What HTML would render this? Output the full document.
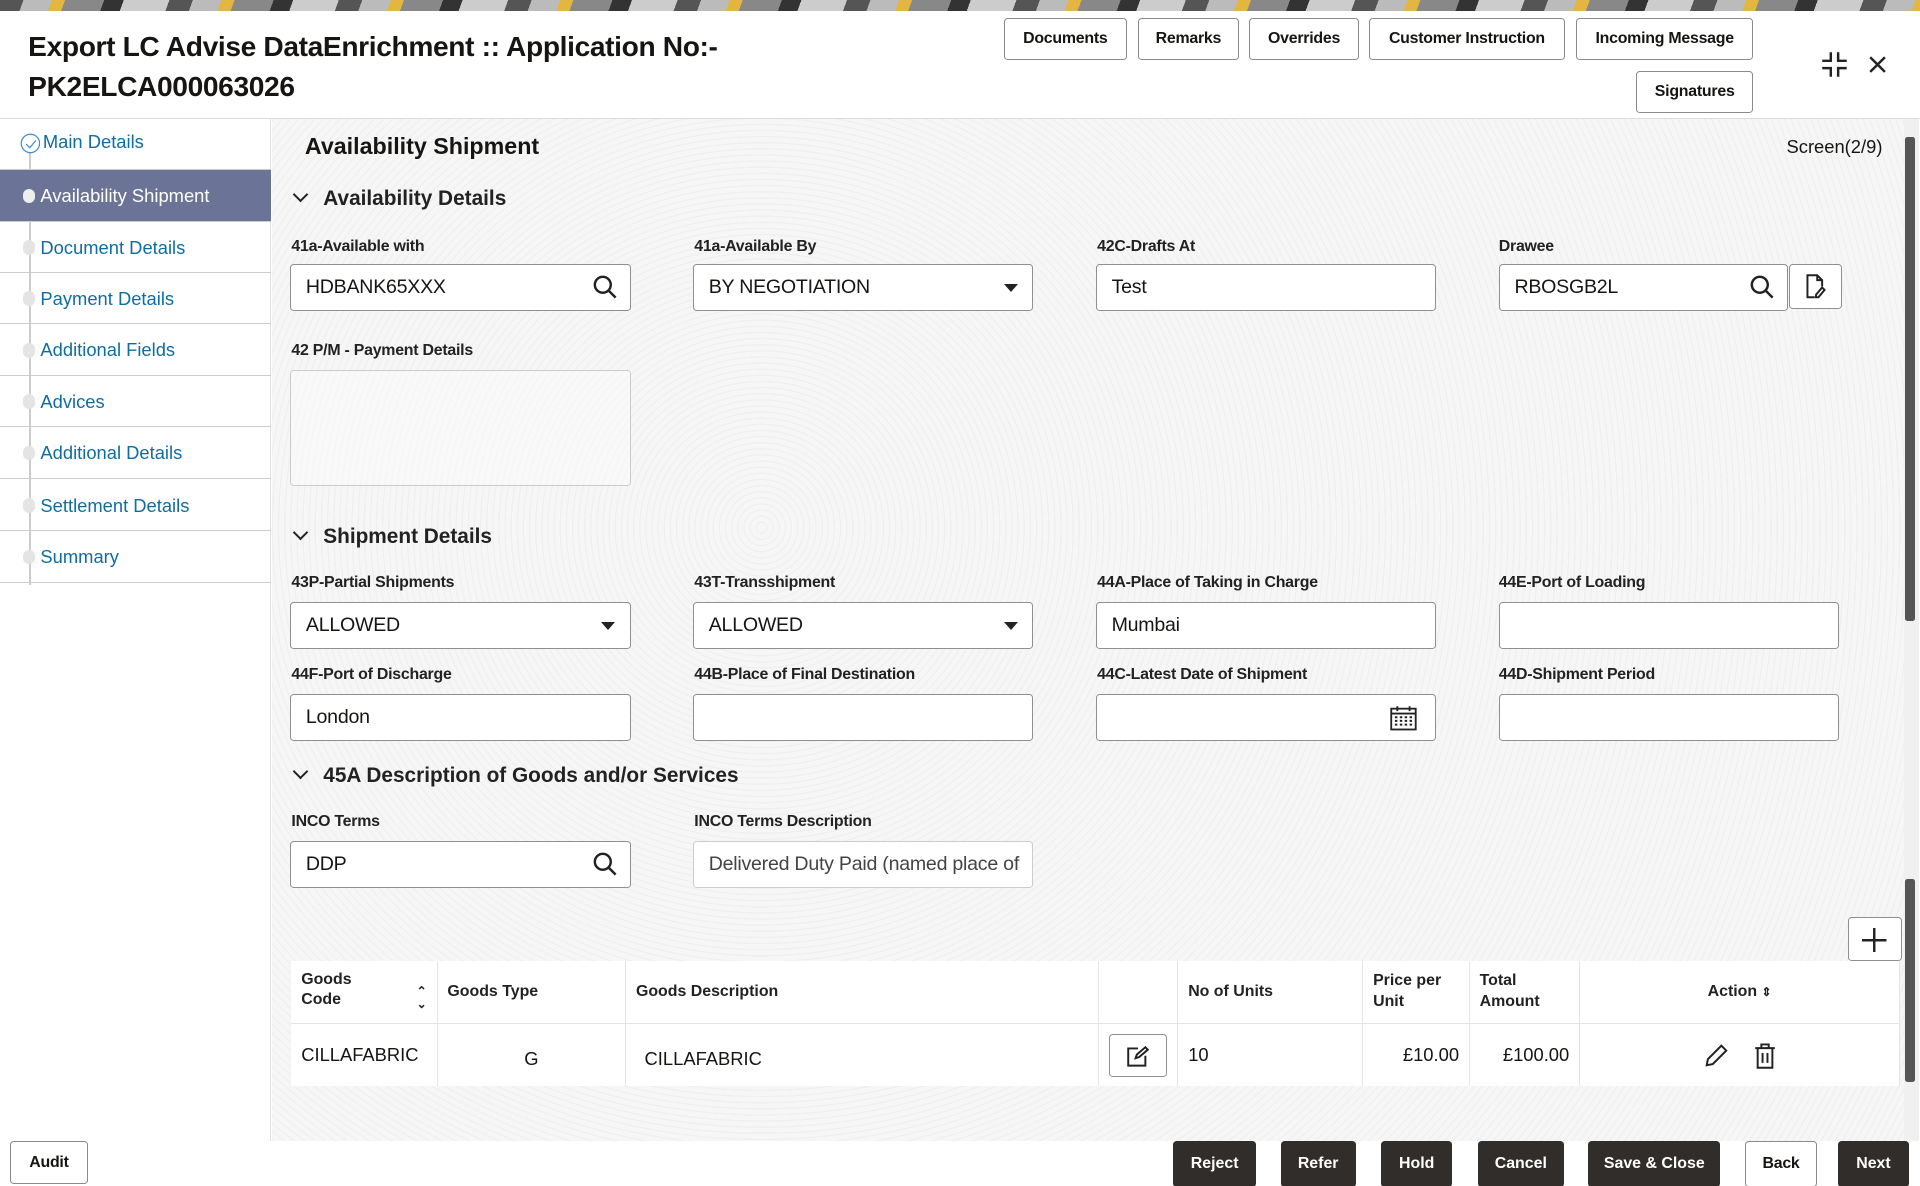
<!DOCTYPE html>
<html><head><meta charset="utf-8"><style>
*{box-sizing:border-box;margin:0;padding:0}
html,body{width:1920px;height:1186px;overflow:hidden;background:#fff}
#w{zoom:1.22449;width:1568px;height:969px;position:relative;font-family:"Liberation Sans",sans-serif;color:#161513;overflow:hidden}
.a{position:absolute}
.top{left:0;top:0;width:1568px;height:9px;background:repeating-linear-gradient(110deg,#555 0 18px,#bbb 18px 40px,#e2b640 40px 50px,#888 50px 80px,#333 80px 95px,#ccc 95px 130px)}
.hdr{left:0;top:9px;width:1568px;height:88px;background:#fff;border-bottom:1px solid #ddd}
.title{left:23px;top:22px;font-size:23px;font-weight:bold;line-height:33px;letter-spacing:-0.3px}
.btn{height:34px;border:1px solid #8a8a8a;border-radius:3px;background:#fff;font-size:13px;font-weight:bold;display:flex;align-items:center;justify-content:center;letter-spacing:-0.2px}
.side{left:0;top:97px;width:221px;height:835px;background:#fff;border-right:1px solid #e0e0e0}
.nav{left:0;width:221px;height:42px;border-bottom:1px solid #ccc;font-size:15px;color:#0f6da2;padding-left:33px;line-height:42px}
.dot{position:absolute;left:19px;top:15px;width:10px;height:12px;border-radius:5px;background:#e4e4e4}
.main{left:222px;top:97px;width:1333px;height:835px;background:#f6f6f6;background-image:repeating-radial-gradient(circle at 30% 40%,#f6f6f6 0 4px,#efefef 4px 5px)}
.lbl{font-size:13px;font-weight:bold;color:#222;letter-spacing:-0.2px}
.inp{width:278px;height:38px;border:1px solid #8f8f8f;border-radius:3px;background:#fff;font-size:16px;padding-left:12px;line-height:36px;letter-spacing:-0.2px}
.sec{font-size:17px;font-weight:bold;color:#222}
.chev{display:inline-block;width:9px;height:9px;border-right:2px solid #222;border-bottom:2px solid #222;transform:rotate(45deg);margin-right:14px;position:relative;top:-4px}
.caret{position:absolute;right:12px;top:15px;width:0;height:0;border-left:6px solid transparent;border-right:6px solid transparent;border-top:7px solid #222}
.srch{position:absolute;right:10px;top:8px}
table{border-collapse:collapse;background:#fff;font-size:13px;table-layout:fixed}
th{font-weight:bold;text-align:left;padding:0 8px;height:51px;border-right:1px solid #e4e4e4;border-bottom:1px solid #e4e4e4;line-height:17px;color:#222}
td{height:51px;padding:0 8px;border-right:1px solid #e4e4e4;font-size:15px}
.dk{height:37px;background:#312d2a;color:#fff;border-radius:3px;font-size:13px;font-weight:bold;display:flex;align-items:center;justify-content:center}
</style></head><body><div id="w">
<div class="a top"></div>
<div class="a hdr"></div>
<div class="a title">Export LC Advise DataEnrichment :: Application No:-<br>PK2ELCA000063026</div>
<div class="a btn" style="left:820px;top:15px;width:100px">Documents</div>
<div class="a btn" style="left:929px;top:15px;width:83px">Remarks</div>
<div class="a btn" style="left:1020px;top:15px;width:90px">Overrides</div>
<div class="a btn" style="left:1118px;top:15px;width:160px">Customer Instruction</div>
<div class="a btn" style="left:1287px;top:15px;width:145px">Incoming Message</div>
<div class="a btn" style="left:1336px;top:58px;width:96px">Signatures</div>
<svg class="a" style="left:1487px;top:42px" width="22" height="22" viewBox="0 0 22 22" fill="none" stroke="#222" stroke-width="2"><path d="M8 1v7H1M14 1v7h7M8 21v-7H1M14 21v-7h7"/></svg>
<svg class="a" style="left:1526px;top:46px" width="14" height="14" viewBox="0 0 14 14" stroke="#222" stroke-width="2"><path d="M1 1l12 12M13 1L1 13"/></svg>

<div class="a side"></div>
<div class="a" style="left:24px;top:118px;width:1px;height:360px;background:#ccc"></div>
<div class="a nav" style="top:97px;line-height:38px;padding-left:35px">Main Details<svg style="position:absolute;left:16px;top:12px" width="17" height="17"><circle cx="8.5" cy="8.5" r="7.5" fill="#fff" stroke="#3a8fd0"/><path d="M5 9l3 3 5-6" fill="none" stroke="#3a8fd0"/></svg></div>
<div class="a nav" style="top:139px;background:#6b7396;color:#fff;border-bottom:1px solid #ccc">Availability Shipment<div class="dot" style="background:#eee"></div></div>
<div class="a nav" style="top:181px">Document Details<div class="dot"></div></div>
<div class="a nav" style="top:223px">Payment Details<div class="dot"></div></div>
<div class="a nav" style="top:265px">Additional Fields<div class="dot"></div></div>
<div class="a nav" style="top:307px">Advices<div class="dot"></div></div>
<div class="a nav" style="top:349px">Additional Details<div class="dot"></div></div>
<div class="a nav" style="top:392px">Settlement Details<div class="dot"></div></div>
<div class="a nav" style="top:434px">Summary<div class="dot"></div></div>

<div class="a main"></div>
<div class="a" style="left:1555px;top:97px;width:12px;height:835px;background:#f0f0f0"></div>
<div class="a" style="left:1556px;top:112px;width:8px;height:395px;background:#555;border-radius:2px"></div>
<div class="a" style="left:1556px;top:718px;width:8px;height:166px;background:#555;border-radius:2px"></div>

<div class="a" style="left:249px;top:109px;font-size:19px;font-weight:bold">Availability Shipment</div>
<div class="a" style="left:1459px;top:111px;font-size:15px">Screen(2/9)</div>

<div class="a sec" style="left:241px;top:153px"><span class="chev"></span>Availability Details</div>
<div class="a lbl" style="left:238px;top:194px">41a-Available with</div>
<div class="a lbl" style="left:567px;top:194px">41a-Available By</div>
<div class="a lbl" style="left:896px;top:194px">42C-Drafts At</div>
<div class="a lbl" style="left:1224px;top:194px">Drawee</div>
<div class="a inp" style="left:237px;top:216px">HDBANK65XXX<svg class="srch" width="20" height="20" viewBox="0 0 20 20" fill="none" stroke="#222" stroke-width="2"><circle cx="8" cy="8" r="6.5"/><path d="M13 13l5.5 5.5"/></svg></div>
<div class="a inp" style="left:566px;top:216px">BY NEGOTIATION<span class="caret"></span></div>
<div class="a inp" style="left:895px;top:216px">Test</div>
<div class="a inp" style="left:1224px;top:216px;width:236px">RBOSGB2L<svg class="srch" width="20" height="20" viewBox="0 0 20 20" fill="none" stroke="#222" stroke-width="2"><circle cx="8" cy="8" r="6.5"/><path d="M13 13l5.5 5.5"/></svg></div>
<div class="a" style="left:1461px;top:216px;width:43px;height:36px;border:1px solid #8f8f8f;border-radius:3px;background:#fff"><svg style="position:absolute;left:12px;top:7px" width="18" height="20" viewBox="0 0 18 20" fill="none" stroke="#222" stroke-width="1.6"><path d="M8 19H2V1h8l4 4v5M10 1v4h4M9 17l5-6 2 2-5 6H9z"/></svg></div>
<div class="a lbl" style="left:238px;top:279px">42 P/M - Payment Details</div>
<div class="a" style="left:237px;top:302px;width:278px;height:95px;border:1px solid #ccc;border-radius:3px;background:rgba(255,255,255,.4)"></div>

<div class="a sec" style="left:241px;top:429px"><span class="chev"></span>Shipment Details</div>
<div class="a lbl" style="left:238px;top:469px">43P-Partial Shipments</div>
<div class="a lbl" style="left:567px;top:469px">43T-Transshipment</div>
<div class="a lbl" style="left:896px;top:469px">44A-Place of Taking in Charge</div>
<div class="a lbl" style="left:1224px;top:469px">44E-Port of Loading</div>
<div class="a inp" style="left:237px;top:492px">ALLOWED<span class="caret"></span></div>
<div class="a inp" style="left:566px;top:492px">ALLOWED<span class="caret"></span></div>
<div class="a inp" style="left:895px;top:492px">Mumbai</div>
<div class="a inp" style="left:1224px;top:492px"></div>
<div class="a lbl" style="left:238px;top:544px">44F-Port of Discharge</div>
<div class="a lbl" style="left:567px;top:544px">44B-Place of Final Destination</div>
<div class="a lbl" style="left:896px;top:544px">44C-Latest Date of Shipment</div>
<div class="a lbl" style="left:1224px;top:544px">44D-Shipment Period</div>
<div class="a inp" style="left:237px;top:567px">London</div>
<div class="a inp" style="left:566px;top:567px"></div>
<div class="a inp" style="left:895px;top:567px"><svg style="position:absolute;right:15px;top:8px" width="22" height="21" viewBox="0 0 22 21" fill="none" stroke="#222" stroke-width="1.5"><rect x="1" y="3" width="20" height="17"/><path d="M1 7h20M6 1v4M16 1v4"/><path d="M4 10h2M8 10h2M12 10h2M16 10h2M4 13h2M8 13h2M12 13h2M16 13h2M4 16h2M8 16h2M12 16h2M16 16h2" stroke-width="1.6"/></svg></div>
<div class="a inp" style="left:1224px;top:567px"></div>

<div class="a sec" style="left:241px;top:624px"><span class="chev"></span>45A Description of Goods and/or Services</div>
<div class="a lbl" style="left:238px;top:664px">INCO Terms</div>
<div class="a lbl" style="left:567px;top:664px">INCO Terms Description</div>
<div class="a inp" style="left:237px;top:687px">DDP<svg class="srch" width="20" height="20" viewBox="0 0 20 20" fill="none" stroke="#222" stroke-width="2"><circle cx="8" cy="8" r="6.5"/><path d="M13 13l5.5 5.5"/></svg></div>
<div class="a inp" style="left:566px;top:687px;border-color:#ccc;color:#444;overflow:hidden;white-space:nowrap">Delivered Duty Paid (named place of</div>

<div class="a" style="left:1509px;top:749px;width:44px;height:36px;border:1px solid #8f8f8f;border-radius:3px;background:#fff"><svg style="position:absolute;left:11px;top:8px" width="20" height="20" stroke="#222" stroke-width="2"><path d="M10 0v20M0 10h20"/></svg></div>

<table class="a" style="left:238px;top:785px;width:1314px">
<tr><th style="width:119px">Goods<br>Code <span style="float:right;font-size:10px;line-height:10px;position:relative;top:-4px">⌃<br>⌄</span></th><th style="width:154px">Goods Type</th><th style="width:386px">Goods Description</th><th style="width:65px"></th><th style="width:151px">No of Units</th><th style="width:87px">Price per<br>Unit</th><th style="width:90px">Total<br>Amount</th><th style="text-align:center">Action <span style="font-size:10px">⇕</span></th></tr>
<tr><td>CILLAFABRIC</td><td style="text-align:center;padding-top:6px">G</td><td style="padding-left:15px;padding-top:6px">CILLAFABRIC</td><td><div style="width:48px;height:35px;border:1px solid #8f8f8f;border-radius:3px;position:relative"><svg style="position:absolute;left:14px;top:9px" width="18" height="17" fill="none" stroke="#222" stroke-width="1.6"><path d="M9 2H1v14h14V8M7 10l1-3 7-6 2 2-7 6z"/></svg></div></td><td>10</td><td style="text-align:right">£10.00</td><td style="text-align:right">£100.00</td><td style="text-align:center"><svg width="22" height="22" fill="none" stroke="#222" stroke-width="1.6" style="margin-right:20px;vertical-align:middle"><path d="M3 19l1-5L15 3l4 4L8 18z"/></svg><svg width="18" height="22" fill="none" stroke="#222" stroke-width="1.6" style="vertical-align:middle"><path d="M1 5h16M6 5V2h6v3M3 5v16h12V5M7 9v8M11 9v8"/></svg></td></tr>
</table>

<div class="a" style="left:0;top:932px;width:1568px;height:37px;background:#fff"></div>
<div class="a btn" style="left:8px;top:932px;width:64px;height:35px">Audit</div>
<div class="a dk" style="left:958px;top:932px;width:68px">Reject</div>
<div class="a dk" style="left:1046px;top:932px;width:61px">Refer</div>
<div class="a dk" style="left:1128px;top:932px;width:58px">Hold</div>
<div class="a dk" style="left:1207px;top:932px;width:70px">Cancel</div>
<div class="a dk" style="left:1297px;top:932px;width:108px">Save &amp; Close</div>
<div class="a btn" style="left:1425px;top:932px;width:59px;height:37px">Back</div>
<div class="a dk" style="left:1501px;top:932px;width:58px">Next</div>
</div></body></html>
